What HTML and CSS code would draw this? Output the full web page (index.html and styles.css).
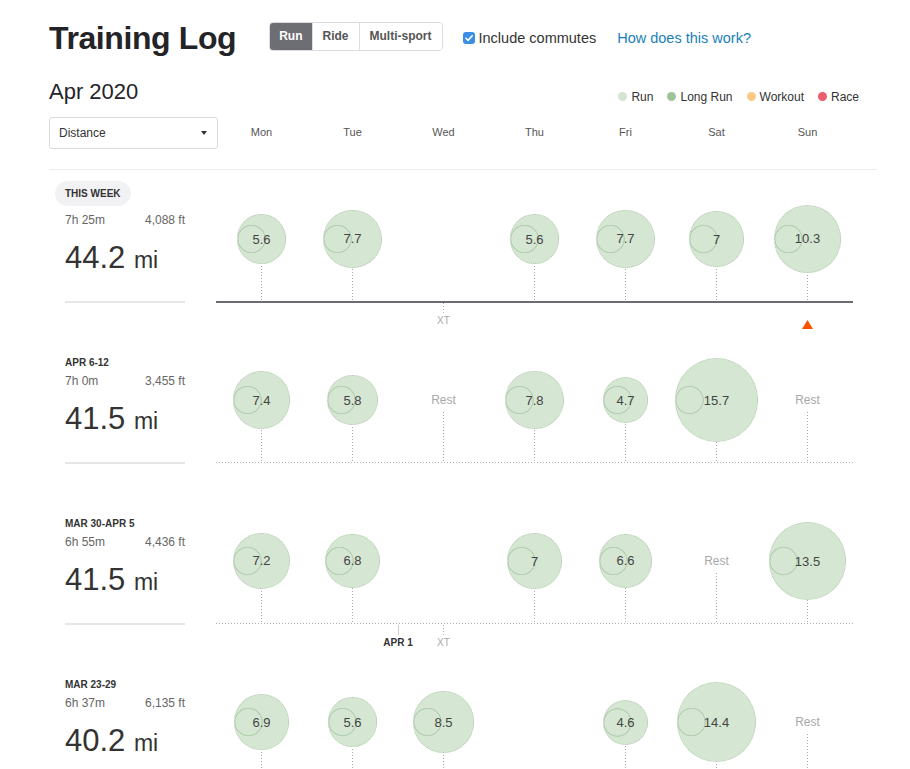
FILE: index.html
```html
<!DOCTYPE html>
<html lang="en">
<head>
<meta charset="utf-8">
<title>Training Log</title>
<link rel="stylesheet" href="styles.css">
</head>
<body>
<div class="page">
  <header class="top">
    <h1 class="title">Training Log</h1>
    <div class="seg">
      <button class="seg-btn active">Run</button>
      <button class="seg-btn">Ride</button>
      <button class="seg-btn">Multi-sport</button>
    </div>
    <label class="check">
      <span class="box"><svg width="12" height="12" viewBox="0 0 12 12"><path d="M3 6.3 L5.1 8.4 L9.2 3.8" fill="none" stroke="#fff" stroke-width="1.6" stroke-linecap="round" stroke-linejoin="round"/></svg></span>
      Include commutes
    </label>
    <a class="help" href="#">How does this work?</a>
  </header>

  <div class="month-row">
    <h2 class="month">Apr 2020</h2>
    <ul class="legend">
      <li><span class="dot run"></span>Run</li>
      <li><span class="dot long"></span>Long Run</li>
      <li><span class="dot workout"></span>Workout</li>
      <li><span class="dot race"></span>Race</li>
    </ul>
  </div>

  <div class="controls">
    <div class="select-cell">
      <div class="select">Distance <span class="caret"></span></div>
    </div>
    <div class="days">
      <span>Mon</span><span>Tue</span><span>Wed</span><span>Thu</span><span>Fri</span><span>Sat</span><span>Sun</span>
    </div>
  </div>

  <div class="divider"></div>

  <section class="week current">
    <div class="summary">
      <span class="pill">THIS WEEK</span>
      <div class="stats"><span>7h 25m</span><span>4,088 ft</span></div>
      <div class="total">44.2 <span class="unit">mi</span></div>
      <div class="rule"></div>
    </div>
    <div class="chart">
      <div class="slots">
        <div class="slot has"><div class="bubble" style="width:49.7px;height:49.7px">5.6</div></div>
        <div class="slot has"><div class="bubble" style="width:58.3px;height:58.3px">7.7</div></div>
        <div class="slot"></div>
        <div class="slot has"><div class="bubble" style="width:49.7px;height:49.7px">5.6</div></div>
        <div class="slot has"><div class="bubble" style="width:58.3px;height:58.3px">7.7</div></div>
        <div class="slot has"><div class="bubble" style="width:55.6px;height:55.6px">7</div></div>
        <div class="slot has"><div class="bubble" style="width:67.4px;height:67.4px">10.3</div></div>
      </div>
      <div class="bar"></div>
      <div class="marks">
        <div class="mark wed"><span class="tick dotted"></span><span class="mark-text xt">XT</span></div>
        <div class="mark sun"><svg class="today" width="11" height="9" viewBox="0 0 11 9"><polygon points="5.5,0 11,9 0,9" fill="#fc5200"/></svg></div>
      </div>
    </div>
  </section>

  <section class="week">
    <div class="summary">
      <span class="label">APR 6-12</span>
      <div class="stats"><span>7h 0m</span><span>3,455 ft</span></div>
      <div class="total">41.5 <span class="unit">mi</span></div>
      <div class="rule"></div>
    </div>
    <div class="chart">
      <div class="slots">
        <div class="slot has"><div class="bubble" style="width:57.1px;height:57.1px">7.4</div></div>
        <div class="slot has"><div class="bubble" style="width:50.6px;height:50.6px">5.8</div></div>
        <div class="slot has"><span class="rest">Rest</span></div>
        <div class="slot has"><div class="bubble" style="width:58.6px;height:58.6px">7.8</div></div>
        <div class="slot has"><div class="bubble" style="width:45.5px;height:45.5px">4.7</div></div>
        <div class="slot has"><div class="bubble" style="width:83.2px;height:83.2px">15.7</div></div>
        <div class="slot has"><span class="rest">Rest</span></div>
      </div>
      <div class="bar"></div>
      <div class="marks"></div>
    </div>
  </section>

  <section class="week">
    <div class="summary">
      <span class="label">MAR 30-APR 5</span>
      <div class="stats"><span>6h 55m</span><span>4,436 ft</span></div>
      <div class="total">41.5 <span class="unit">mi</span></div>
      <div class="rule"></div>
    </div>
    <div class="chart">
      <div class="slots">
        <div class="slot has"><div class="bubble" style="width:56.3px;height:56.3px">7.2</div></div>
        <div class="slot has"><div class="bubble" style="width:54.8px;height:54.8px">6.8</div></div>
        <div class="slot"></div>
        <div class="slot has"><div class="bubble" style="width:55.6px;height:55.6px">7</div></div>
        <div class="slot has"><div class="bubble" style="width:53.9px;height:53.9px">6.6</div></div>
        <div class="slot has"><span class="rest">Rest</span></div>
        <div class="slot has"><div class="bubble" style="width:77.2px;height:77.2px">13.5</div></div>
      </div>
      <div class="bar"></div>
      <div class="marks">
        <div class="mark month-start"><span class="tick solid"></span><span class="mark-text date">APR 1</span></div>
        <div class="mark wed"><span class="tick dotted"></span><span class="mark-text xt">XT</span></div>
      </div>
    </div>
  </section>

  <section class="week">
    <div class="summary">
      <span class="label">MAR 23-29</span>
      <div class="stats"><span>6h 37m</span><span>6,135 ft</span></div>
      <div class="total">40.2 <span class="unit">mi</span></div>
      <div class="rule"></div>
    </div>
    <div class="chart">
      <div class="slots">
        <div class="slot has"><div class="bubble" style="width:55.2px;height:55.2px">6.9</div></div>
        <div class="slot has"><div class="bubble" style="width:49.7px;height:49.7px">5.6</div></div>
        <div class="slot has"><div class="bubble" style="width:61.2px;height:61.2px">8.5</div></div>
        <div class="slot"></div>
        <div class="slot has"><div class="bubble" style="width:45px;height:45px">4.6</div></div>
        <div class="slot has"><div class="bubble" style="width:79.7px;height:79.7px">14.4</div></div>
        <div class="slot has"><span class="rest">Rest</span></div>
      </div>
      <div class="bar"></div>
      <div class="marks"></div>
    </div>
  </section>
</div>
</body>
</html>
```

FILE: styles.css
```css
* { box-sizing: border-box; }

body {
  margin: 0;
  background: #fff;
  font-family: "Liberation Sans", Arial, sans-serif;
  color: #333;
}

.page {
  padding-left: 49px;
  width: 877px;
}

/* header */
.top {
  display: flex;
  align-items: center;
  height: 40px;
  margin-top: 18px;
}

.title {
  margin: 0;
  font-size: 32px;
  line-height: 40px;
  font-weight: 700;
  letter-spacing: -0.4px;
  color: #242428;
}

.seg {
  display: flex;
  margin-left: 33px;
  margin-bottom: 4px;
  border: 1px solid #dcdce0;
  border-radius: 4px;
  overflow: hidden;
}

.seg-btn {
  font-family: inherit;
  font-size: 12px;
  font-weight: 700;
  line-height: 27px;
  height: 27px;
  padding: 0 10px;
  margin: 0;
  border: 0;
  border-left: 1px solid #dcdce0;
  background: #fff;
  color: #555;
}

.seg-btn.active {
  border-left: 0;
  padding: 0 9px;
  background: #6d6d74;
  color: #fff;
}

.check {
  display: flex;
  align-items: center;
  margin-left: 20px;
  font-size: 14.5px;
  color: #333;
}

.box {
  display: flex;
  width: 12px;
  height: 12px;
  border-radius: 3px;
  background: #3a8ee6;
  margin-right: 4px;
}

.help {
  margin-left: 21px;
  font-size: 14.5px;
  color: #1a7fb8;
  text-decoration: none;
}

/* month + legend */
.month-row {
  display: flex;
  align-items: flex-end;
  justify-content: space-between;
  margin-top: 20px;
}

.month {
  margin: 0;
  font-size: 22px;
  line-height: 28px;
  font-weight: 400;
  color: #242428;
}

.legend {
  display: flex;
  gap: 14px;
  list-style: none;
  margin: 0 18px 1px 0;
  padding: 0;
  font-size: 12px;
  line-height: 16px;
  color: #333;
}

.dot {
  display: inline-block;
  width: 9px;
  height: 9px;
  border-radius: 50%;
  margin-right: 4px;
}

.dot.run { background: #d3e5d0; }
.dot.long { background: #9fc29b; }
.dot.workout { background: #fcc987; }
.dot.race { background: #eb5e6a; }

/* controls */
.controls {
  display: grid;
  grid-template-columns: 167px 637px;
  align-items: center;
  margin-top: 11px;
}

.select {
  width: 169px;
  height: 32px;
  border: 1px solid #dcdce0;
  border-radius: 3px;
  display: flex;
  align-items: center;
  justify-content: space-between;
  padding: 0 10px 0 9px;
  font-size: 12px;
  color: #333;
}

.caret {
  width: 0;
  height: 0;
  border-left: 3.5px solid transparent;
  border-right: 3.5px solid transparent;
  border-top: 4px solid #333;
}

.days {
  display: grid;
  grid-template-columns: repeat(7, 1fr);
  text-align: center;
  font-size: 11px;
  line-height: 13px;
  color: #555;
  margin-bottom: 2px;
}

.divider {
  height: 1px;
  background: #ececee;
  margin-top: 20px;
}

/* weeks */
.week {
  display: grid;
  grid-template-columns: 167px 637px;
  align-items: end;
  padding-top: 6px;
}

.week.current {
  padding-top: 7px;
}

.summary {
  display: flex;
  flex-direction: column;
  align-items: flex-start;
  padding-left: 16px;
  margin-bottom: 29px;
}

.pill {
  display: inline-block;
  margin-left: -10px;
  margin-bottom: 6px;
  padding: 0 10px;
  height: 25px;
  line-height: 25px;
  border-radius: 13px;
  background: #f2f2f4;
  font-size: 10px;
  font-weight: 700;
  color: #333;
}

.label {
  font-size: 10px;
  line-height: 14px;
  font-weight: 700;
  color: #333;
  margin-bottom: 3px;
}

.stats {
  width: 120px;
  display: flex;
  justify-content: space-between;
  font-size: 12px;
  line-height: 16px;
  color: #666;
  margin-bottom: 13px;
}

.total {
  font-size: 31px;
  line-height: 34px;
  color: #333;
  margin-bottom: 24px;
}

.unit {
  font-size: 23px;
}

.rule {
  width: 120px;
  height: 2px;
  background: #e6e6e8;
}

.slots {
  display: grid;
  grid-template-columns: repeat(7, 1fr);
}

.slot {
  height: 124px;
  display: flex;
  align-items: center;
  justify-content: center;
}

.slot.has {
  background-image: repeating-linear-gradient(to bottom, #a8a8a8 0, #a8a8a8 1px, transparent 1px, transparent 3px);
  background-size: 1px 50%;
  background-position: center bottom;
  background-repeat: no-repeat;
}

.bubble {
  flex: none;
  display: flex;
  align-items: center;
  justify-content: center;
  border-radius: 50%;
  border: 1px dotted #b3ccb0;
  background:
    radial-gradient(circle at 13.5px 50%, transparent 12.8px, rgba(150, 185, 146, 0.5) 13.3px, rgba(150, 185, 146, 0.5) 14px, transparent 14.5px),
    #d5e6d2;
  font-size: 13px;
  color: #444;
}

.rest {
  background: #fff;
  color: #a8a8a8;
  font-size: 12px;
  line-height: 20px;
  padding: 0 2px;
}

.bar {
  height: 2px;
  background-image: linear-gradient(to right, #b0b0b0 1px, transparent 1px);
  background-size: 3px 1px;
  background-repeat: repeat-x;
}

.week.current .bar {
  background: #6b6b73;
}

.marks {
  display: grid;
  grid-template-columns: repeat(14, 1fr);
  height: 29px;
}

.mark {
  grid-row: 1;
  display: flex;
  flex-direction: column;
  align-items: center;
}

.mark.month-start { grid-column: 4 / span 2; }
.mark.wed { grid-column: 5 / span 2; }
.mark.sun { grid-column: 13 / span 2; }

.tick {
  width: 1px;
  height: 10px;
}

.tick.dotted {
  background-image: repeating-linear-gradient(to bottom, #b0b0b0 0, #b0b0b0 1px, transparent 1px, transparent 3px);
}

.tick.solid {
  background: #cfcfd2;
}

.mark-text {
  font-size: 10px;
  line-height: 12px;
  margin-top: 2px;
}

.mark-text.xt { color: #aaa; }
.mark-text.date { color: #333; font-weight: 700; }

.today {
  margin-top: 17px;
}
```
